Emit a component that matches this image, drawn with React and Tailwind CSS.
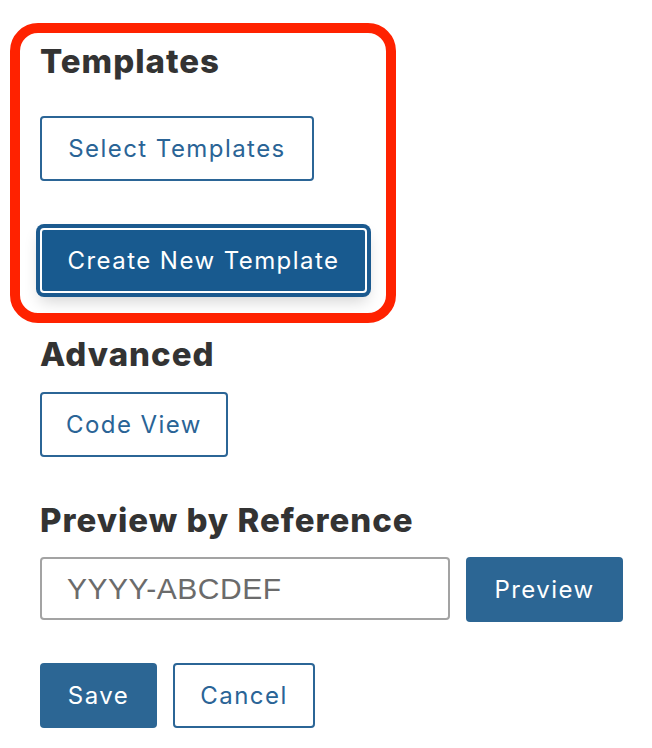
import React from "react";

function OutlineButton({ children, className = "" }) {
	return (
		<button
			className={
				"h-[65px] flex items-center justify-center rounded-[4px] border-2 border-[#2b6596] bg-white text-[24px] tracking-[0.06em] text-[#2a6496] " +
				className
			}
		>
			{children}
		</button>
	);
}

function SolidButton({ children, className = "" }) {
	return (
		<button
			className={
				"h-[65px] flex items-center justify-center rounded-[4px] bg-[#2c6694] text-[24px] tracking-[0.06em] text-white " +
				className
			}
		>
			{children}
		</button>
	);
}

export default function App() {
	return (
		<div className="min-h-screen bg-white pt-[23px] font-['Inter',sans-serif] text-[#333]">
			<div className="ml-[10px] w-[386px] rounded-[28px] border-[10px] border-[#ff2200] pl-5 pt-[9px] pb-5">
				<h2 className="text-[33px] leading-[38px] font-extrabold tracking-[0.03em]">Templates</h2>
				<OutlineButton className="mt-[36px] w-[274px]">Select Templates</OutlineButton>
				<button className="mt-[47px] h-[65px] w-[327px] flex items-center justify-center rounded-[4px] border-2 border-white bg-[#185a8f] text-[24px] tracking-[0.06em] text-white ring-4 ring-[#1b5a8f] shadow-[0_8px_16px_rgba(0,0,0,0.18)]">
					Create New Template
				</button>
			</div>

			<div className="pl-10">
				<h2 className="mt-[12px] text-[33px] leading-[38px] font-extrabold tracking-[0.03em]">Advanced</h2>
				<OutlineButton className="mt-[19px] w-[188px]">Code View</OutlineButton>

				<h2 className="mt-[44px] text-[33px] leading-[38px] font-extrabold tracking-[0.03em]">
					Preview by Reference
				</h2>
				<div className="mt-[18px] flex items-start gap-4">
					<input
						placeholder="YYYY-ABCDEF"
						className="h-[63px] w-[410px] rounded-[4px] border-2 border-[#a3a3a3] px-[25px] font-['Liberation_Sans',sans-serif] text-[30px] tracking-[0.5px] text-[#333] placeholder:text-[#6b6b6b] outline-none"
					/>
					<SolidButton className="w-[157px]">Preview</SolidButton>
				</div>

				<div className="mt-[41px] flex gap-4">
					<SolidButton className="w-[117px]">Save</SolidButton>
					<OutlineButton className="w-[142px]">Cancel</OutlineButton>
				</div>
			</div>
		</div>
	);
}
